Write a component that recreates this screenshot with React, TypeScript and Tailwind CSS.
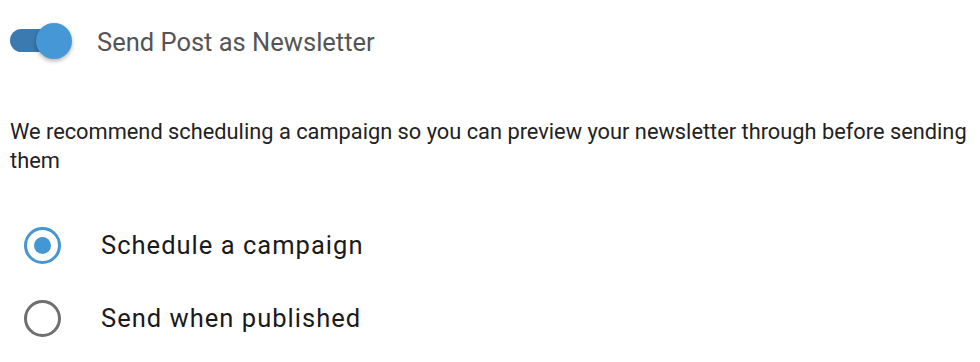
import React from "react";

export default function App() {
  return (
    <div className="w-[980px] h-[362px] bg-white overflow-hidden" style={{ fontFamily: "Roboto, 'Noto Sans', sans-serif" }}>
      <div className="flex items-center h-[80px] pl-[10px] pt-[1px]">
        <div className="relative w-[62px] h-[36px] flex items-center">
          <div className="w-[60px] h-[23px] rounded-full bg-[#3a7aae]" />
          <div className="absolute left-[26px] top-0 w-[36px] h-[36px] rounded-full bg-[#4598d5] shadow-[0_2px_4px_rgba(0,0,0,0.3)]" />
        </div>
        <span className="ml-[25px] mt-[5px] text-[25.5px] text-[#555555] leading-none">Send Post as Newsletter</span>
      </div>
      <p className="mt-[37px] pl-[10px] pr-[8px] text-[21.8px] leading-[29px] text-[#222222]">
        We recommend scheduling a campaign so you can preview your newsletter through before sending them
      </p>
      <div className="mt-[52px] flex flex-col gap-[36px] pl-[24px]">
        <div className="flex items-center">
          <div className="w-[37px] h-[37px] rounded-full border-[3px] border-[#4597d3] flex items-center justify-center">
            <div className="w-[17px] h-[17px] rounded-full bg-[#4597d3]" />
          </div>
          <span className="ml-[40px] text-[25.5px] tracking-[0.04em] text-[#1a1a1a] leading-none">Schedule a campaign</span>
        </div>
        <div className="flex items-center">
          <div className="w-[37px] h-[37px] rounded-full border-[3px] border-[#6f6f6f]" />
          <span className="ml-[40px] text-[25.5px] tracking-[0.04em] text-[#1a1a1a] leading-none">Send when published</span>
        </div>
      </div>
    </div>
  );
}
